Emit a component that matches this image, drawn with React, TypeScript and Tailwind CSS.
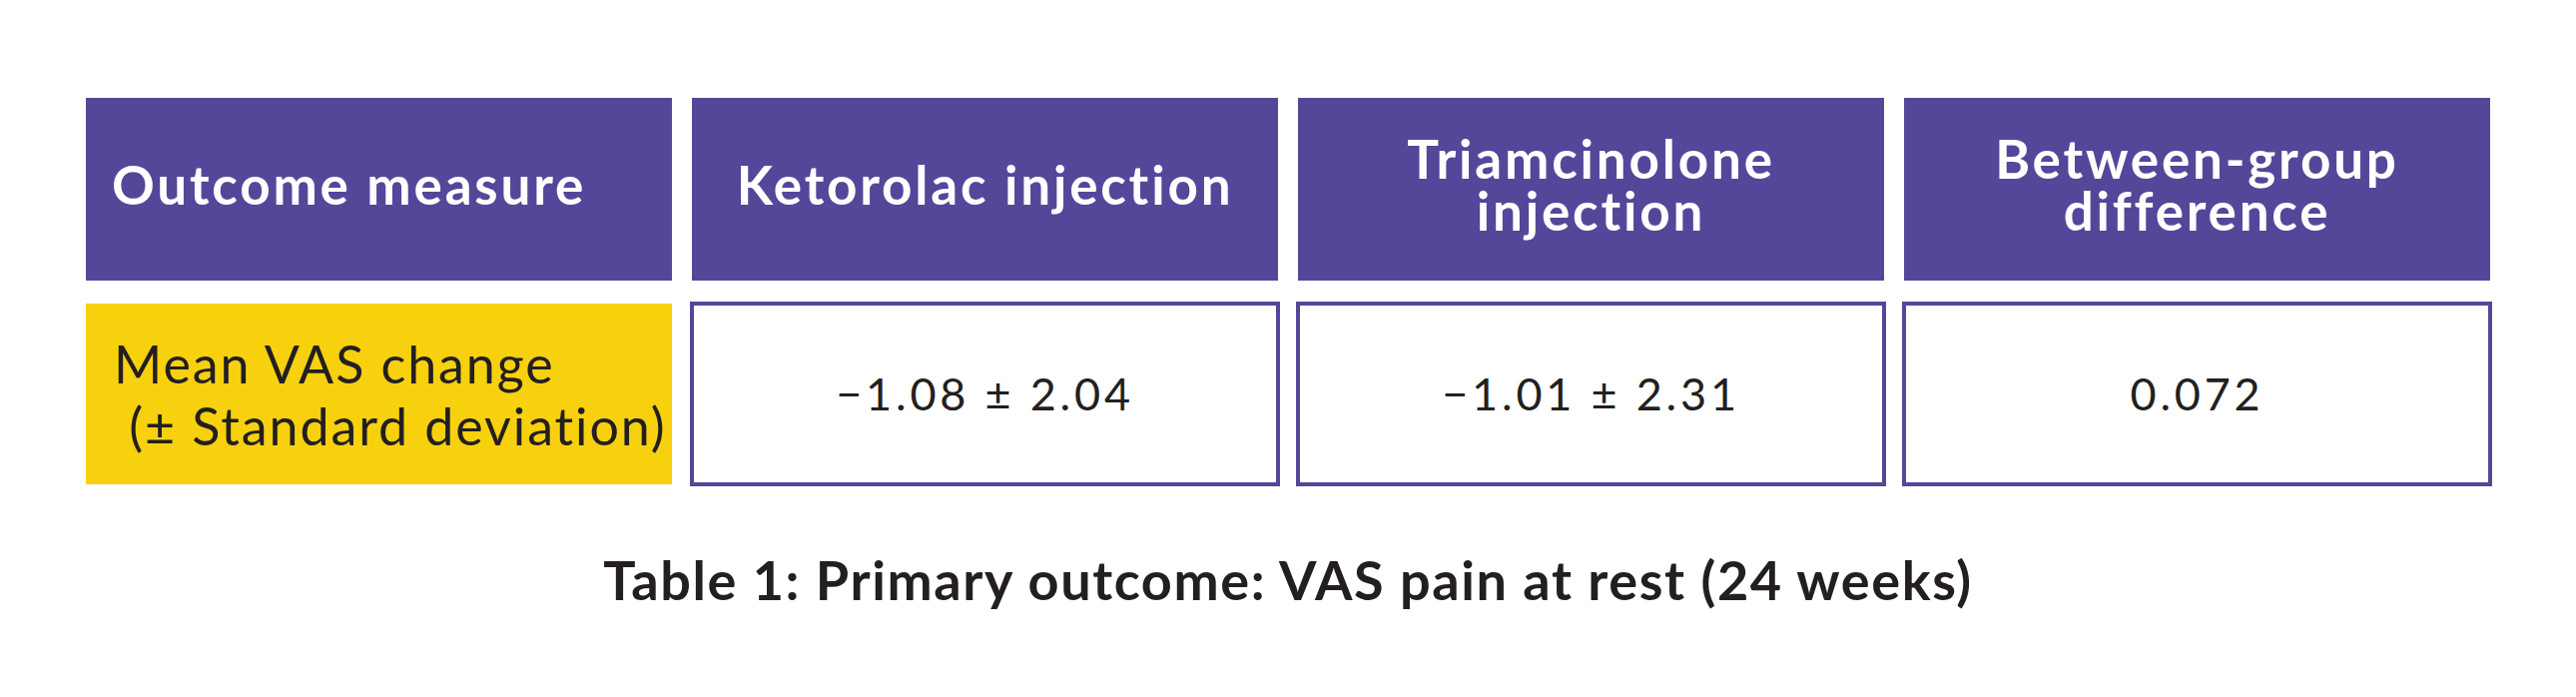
const headers = [
  { label: "Outcome measure", align: "left" },
  { label: "Ketorolac injection", align: "center" },
  { label: "Triamcinolone\ninjection", align: "center" },
  { label: "Between-group\ndifference", align: "center" },
];

const values = ["\u22121.08 \u00b1 2.04", "\u22121.01 \u00b1 2.31", "0.072"];

export default function App() {
  return (
    <div className="min-h-[698px] w-[2580px] bg-white pt-[98px] font-['Lato',sans-serif] text-[#231f20]">
      <div className="mx-[86px] grid grid-cols-4 gap-x-[20px] gap-y-[23px]">
        {headers.map((h) => (
          <div
            key={h.label}
            className={`flex h-[183px] items-center bg-[#54479a] pb-[10px] text-[53px] font-bold leading-[52px] tracking-[2.8px] text-white whitespace-pre-line ${
              h.align === "left" ? "justify-start pl-[26px]" : "justify-center text-center"
            }`}
          >
            {h.label}
          </div>
        ))}

        <div className="flex h-[181px] items-center bg-[#f8d10e] pl-[28px] text-[52px] leading-[62px] tracking-[1.9px]">
          <p className="whitespace-nowrap">
            Mean VAS change
            <br />
            {"\u00a0"}(± Standard deviation)
          </p>
        </div>
        {values.map((v) => (
          <div
            key={v}
            className="-m-[2px] flex items-center justify-center border-4 border-[#54479a] bg-white text-[45px] tracking-[3.8px]"
          >
            {v}
          </div>
        ))}
      </div>

      <p className="mt-[69px] text-center text-[54px] font-bold leading-none tracking-[1.6px]">
        Table 1: Primary outcome: VAS pain at rest (24 weeks)
      </p>
    </div>
  );
}
